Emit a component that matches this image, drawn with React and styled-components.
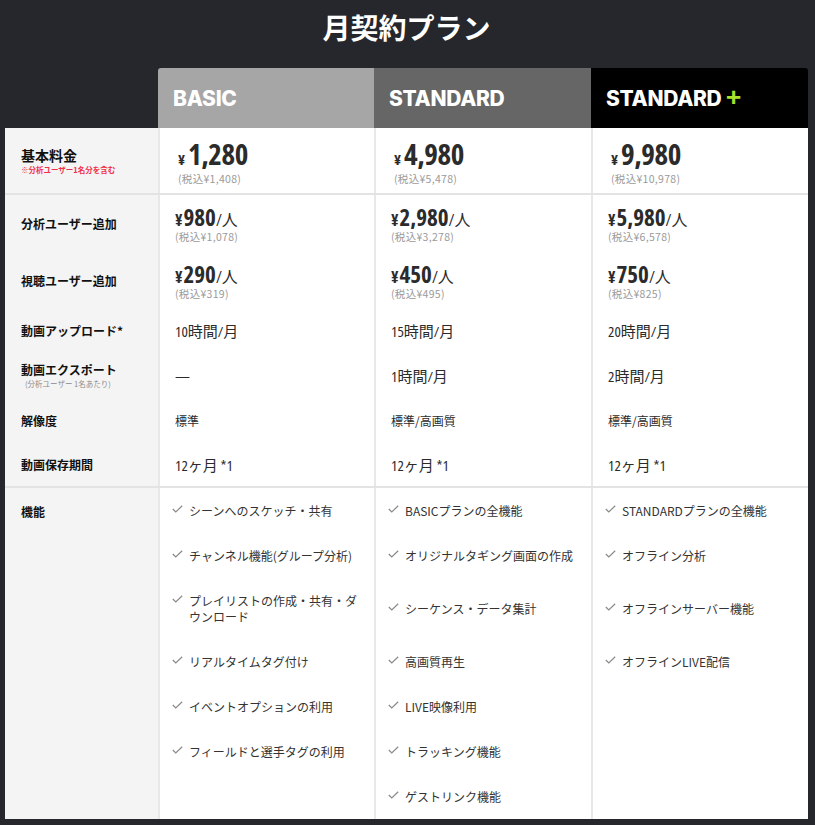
import React from 'react'
import styled, { createGlobalStyle } from 'styled-components'

const COLS = '153px 216px 217px 217px'
const NUM = `"Open Sans", "Noto Sans", "Noto Sans CJK JP", sans-serif`
const JP = `"Noto Sans CJK JP", "Noto Sans", sans-serif`

const GlobalStyle = createGlobalStyle`
  body {
    margin: 0;
    background: #26272c;
    font-family: ${JP};
  }
`

const Page = styled.div`
  min-height: 825px;
  box-sizing: border-box;
  padding: 0 7px 6px 5px;
`

const Title = styled.h1`
  margin: 0;
  height: 54px;
  display: flex;
  align-items: center;
  justify-content: center;
  color: #fff;
  font: 700 28px ${JP};
`

const HeaderRow = styled.div`
  display: grid;
  grid-template-columns: ${COLS};
  height: 60px;
  margin-top: 14px;
`

const HeadCell = styled.div`
  background: ${p => p.$bg};
  display: flex;
  align-items: center;
  padding-left: 15px;
  color: #fff;
  font: 800 21px Inter, Roboto, sans-serif;
  letter-spacing: -0.3px;
  border-radius: ${p => p.$radius || '0'};
`

const Plus = styled.span`
  color: #a8e22a;
  margin: 0 0 5px 3px;
  font: 600 27px/1 Inter, sans-serif;
`

const Body = styled.div`
  background: #fff;
`

const Row = styled.div`
  display: grid;
  grid-template-columns: ${COLS};
  height: ${p => p.$h}px;
  box-sizing: border-box;
  border-bottom: ${p => (p.$line ? '2px solid #e3e3e3' : 'none')};
`

const Label = styled.div`
  background: #f4f4f4;
  padding-left: 16px;
  display: flex;
  flex-direction: column;
  justify-content: center;
  color: #111;
  font: 700 ${p => p.$size || 12}px/17px ${JP};
`

const Note = styled.span`
  font: 400 7.5px/11px ${JP};
  color: ${p => (p.$red ? '#f0304a' : '#8a8a8a')};
  padding-left: ${p => (p.$red ? 0 : 4)}px;
  font-weight: ${p => (p.$red ? 700 : 400)};
`

const Cell = styled.div`
  border-left: 2px solid #e8e8e8;
  padding-left: ${p => p.$pl || 15}px;
  padding-top: ${p => p.$pt || 0}px;
  display: flex;
  flex-direction: column;
  justify-content: ${p => (p.$pt ? 'flex-start' : 'center')};
  color: #2b2b2b;
`

const PriceMain = styled.div`
  display: flex;
  align-items: baseline;
  height: ${p => p.$lh}px;
  line-height: ${p => p.$lh}px;
`

const Yen = styled.span`
  font: 700 ${p => p.$size}px ${NUM};
  font-stretch: 75%;
  margin-right: ${p => p.$gap}px;
`

const Amount = styled.span`
  font: 700 ${p => p.$size}px ${NUM};
  font-stretch: 75%;
  letter-spacing: ${p => (p.$size > 25 ? -0.4 : 0)}px;
`

const Per = styled.span`
  font: 400 16px ${NUM};
  font-stretch: 75%;
`

const Tax = styled.div`
  font: 400 10.5px/14px ${JP};
  color: #9a9a9a;
  letter-spacing: 0.3px;
  margin-top: ${p => p.$mt}px;
`

const Value = styled.div`
  font: 400 ${p => (p.$jp ? 12 : 15)}px ${p => (p.$jp ? JP : NUM)};
  font-stretch: 75%;
  color: #2b2b2b;
`

const FeatureGrid = styled.div`
  display: grid;
  grid-template-columns: ${COLS};
`

const FeatureLabel = styled.div`
  grid-row: 1 / span 7;
  background: #f4f4f4;
  padding: 15px 0 0 16px;
  color: #111;
  font: 700 12px/17px ${JP};
`

const FeatureCell = styled.div`
  border-left: 2px solid #e8e8e8;
  padding: 15px 10px 14px 12px;
  display: flex;
  align-items: center;
  min-height: 16px;
`

const Item = styled.div`
  display: flex;
  align-items: flex-start;
  gap: 6px;
  font: 400 12px/16px ${JP};
  color: #333;
`

const CheckIcon = styled.svg`
  flex: none;
  margin-top: 2px;
`

function Check() {
  return (
    <CheckIcon width="11" height="8" viewBox="0 0 11 8">
      <polyline points="0.8,4 3.8,7 10.2,0.8" fill="none" stroke="#8a8a8a" strokeWidth="1.2" />
    </CheckIcon>
  )
}

const plans = [
  {
    name: 'BASIC', bg: '#a6a6a6', radius: '3px 0 0 0',
    price: '1,280', tax: '1,408',
    analyst: ['980', '1,078'], viewer: ['290', '319'],
    upload: '10時間/月', exp: '—', res: '標準', keep: '12ヶ月 *1',
    features: ['シーンへのスケッチ・共有', 'チャンネル機能(グループ分析)', 'プレイリストの作成・共有・ダウンロード', 'リアルタイムタグ付け', 'イベントオプションの利用', 'フィールドと選手タグの利用'],
  },
  {
    name: 'STANDARD', bg: '#666666',
    price: '4,980', tax: '5,478',
    analyst: ['2,980', '3,278'], viewer: ['450', '495'],
    upload: '15時間/月', exp: '1時間/月', res: '標準/高画質', keep: '12ヶ月 *1',
    features: ['BASICプランの全機能', 'オリジナルタギング画面の作成', 'シーケンス・データ集計', '高画質再生', 'LIVE映像利用', 'トラッキング機能', 'ゲストリンク機能'],
  },
  {
    name: 'STANDARD', plus: true, bg: '#000000', radius: '0 3px 0 0',
    price: '9,980', tax: '10,978',
    analyst: ['5,980', '6,578'], viewer: ['750', '825'],
    upload: '20時間/月', exp: '2時間/月', res: '標準/高画質', keep: '12ヶ月 *1',
    features: ['STANDARDプランの全機能', 'オフライン分析', 'オフラインサーバー機能', 'オフラインLIVE配信'],
  },
]

function SmallPrice({ value }) {
  return (
    <Cell $pt={6}>
      <PriceMain $lh={24}>
        <Yen $size={16} $gap={1}>¥</Yen>
        <Amount $size={23}>{value[0]}</Amount>
        <Per>/人</Per>
      </PriceMain>
      <Tax $mt={5}>(税込¥{value[1]})</Tax>
    </Cell>
  )
}

function SpecRow({ h, line, label, note, field, jp }) {
  return (
    <Row $h={h} $line={line}>
      <Label>
        {label}
        {note && <Note>{note}</Note>}
      </Label>
      {plans.map((p, i) => (
        <Cell key={i}>
          <Value $jp={jp}>{p[field]}</Value>
        </Cell>
      ))}
    </Row>
  )
}

export default function App() {
  return (
    <Page>
      <GlobalStyle />
      <Title>月契約プラン</Title>
      <HeaderRow>
        <div />
        {plans.map((p, i) => (
          <HeadCell key={i} $bg={p.bg} $radius={p.radius}>
            {p.name}
            {p.plus && <Plus>+</Plus>}
          </HeadCell>
        ))}
      </HeaderRow>
      <Body>
        <Row $h={67} $line>
          <Label $size={14}>
            基本料金
            <Note $red>※分析ユーザー1名分を含む</Note>
          </Label>
          {plans.map((p, i) => (
            <Cell key={i} $pl={18} $pt={6}>
              <PriceMain $lh={32}>
                <Yen $size={15} $gap={3}>¥</Yen>
                <Amount $size={29}>{p.price}</Amount>
              </PriceMain>
              <Tax $mt={6}>(税込¥{p.tax})</Tax>
            </Cell>
          ))}
        </Row>
        <Row $h={57}>
          <Label>分析ユーザー追加</Label>
          {plans.map((p, i) => <SmallPrice key={i} value={p.analyst} />)}
        </Row>
        <Row $h={56}>
          <Label>視聴ユーザー追加</Label>
          {plans.map((p, i) => <SmallPrice key={i} value={p.viewer} />)}
        </Row>
        <SpecRow h={44} label="動画アップロード*" field="upload" />
        <SpecRow h={46} label="動画エクスポート" note="(分析ユーザー 1名あたり)" field="exp" />
        <SpecRow h={44} label="解像度" field="res" jp />
        <SpecRow h={46} line label="動画保存期間" field="keep" />
        <FeatureGrid>
          <FeatureLabel>機能</FeatureLabel>
          {Array.from({ length: 7 }).map((_, r) =>
            plans.map((p, i) => {
              const f = p.features[r]
              return (
                <FeatureCell key={r + '-' + i}>
                  {f && (
                    <Item>
                      <Check />
                      <span>{f}</span>
                    </Item>
                  )}
                </FeatureCell>
              )
            })
          )}
        </FeatureGrid>
      </Body>
    </Page>
  )
}
